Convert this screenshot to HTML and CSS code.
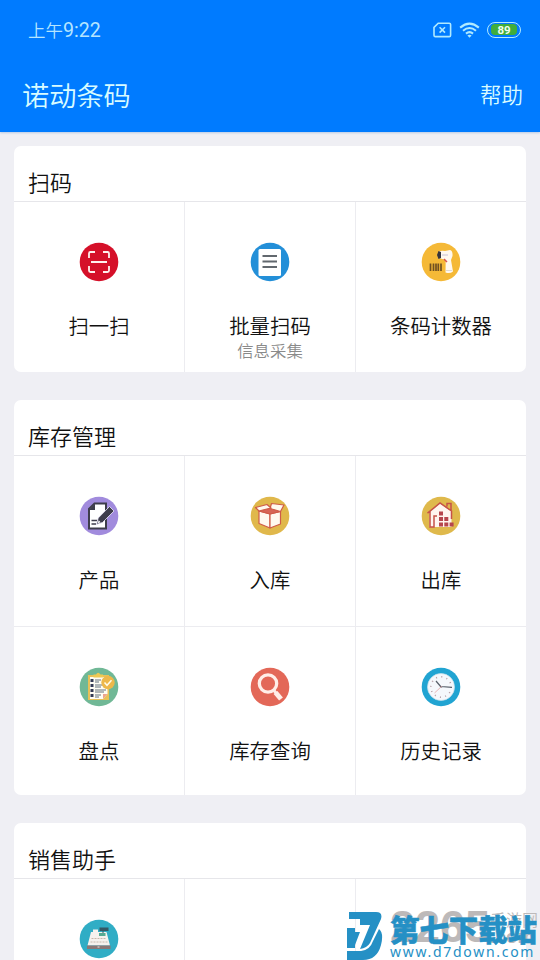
FILE: index.html
```html
<!DOCTYPE html>
<html lang="zh-CN">
<head>
<meta charset="utf-8">
<title>诺动条码</title>
<link rel="stylesheet" href="styles.css">
</head>
<body>
<header class="top">
  <div class="status">
    <span class="time">上午<span class="clock">9:22</span></span>
    <div class="indicators">
      <svg class="sim" viewBox="0 0 19 16"><path d="M5.2 1.2H16.2Q17.6 1.2 17.6 2.6V13.2Q17.6 14.6 16.2 14.6H2.4Q1 14.6 1 13.2V5.4Z"/><path d="M6.600 5.200l5.400 5.400M12 5.200l-5.400 5.400"/></svg>
      <svg class="wifi" viewBox="0 0 22 16"><path d="M1.200 5.500Q11-2.800 20.800 5.500M4.200 8.800Q11 3.100 17.800 8.800M7.300 11.800Q11 8.700 14.700 11.800"/><path class="dot" d="M8.800 13.800Q11 12.200 13.200 13.800L11 16Z"/></svg>
      <span class="battery"><span class="charge">89</span></span>
    </div>
  </div>
  <nav class="bar"><h1>诺动条码</h1><span class="help">帮助</span></nav>
</header>
<main>
  <section class="card">
    <h2>扫码</h2>
    <div class="grid">
      <div class="cell">
        <svg class="icon" viewBox="0 0 40 40"><circle cx="20" cy="20" r="19.300" fill="#d51029"/><path d="M10 16V11.500Q10 10 11.500 10H16M24 10H28.500Q30 10 30 11.500V16M30 24V28.500Q30 30 28.500 30H24M16 30H11.500Q10 30 10 28.500V24M12 20H28" fill="none" stroke="#fff0ed" stroke-width="1.800"/></svg>
        <span class="label">扫一扫</span>
      </div>
      <div class="cell">
        <svg class="icon" viewBox="0 0 40 40"><circle cx="20" cy="20" r="19.300" fill="#238fd8"/><rect x="8.500" y="7" width="22.500" height="27" rx="1.500" fill="#fff"/><path d="M12.500 14H27M12.500 19.500H27M12.500 25H27" stroke="#62686e" stroke-width="2"/></svg>
        <span class="label">批量扫码</span><span class="sub">信息采集</span>
      </div>
      <div class="cell">
        <svg class="icon" viewBox="0 0 40 40"><circle cx="20" cy="20" r="19.300" fill="#f5b937"/><path d="M18 9.500Q20 8.500 24 9L29 8Q32 9 31.500 14L30 18 32 29.500Q29 32 24.500 30.500L24.700 18 18 16Z" fill="#fff8ef"/><path d="M17.500 9L16 13 17.500 17 20 16V10Z" fill="#34343e"/><path d="M21 13H27" stroke="#c8c2d7"/><path d="M23 17l3 3" stroke="#d85352" stroke-width="1.500"/><path d="M25 28.500H31" stroke="#ded9d3"/><path d="M9.500 21.500V29M12.500 21.500V29M15 21.500V29M17.300 21.500V29M20 21.500V29" stroke="#705022" stroke-width="1.700"/></svg>
        <span class="label">条码计数器</span>
      </div>
    </div>
  </section>
  <section class="card">
    <h2>库存管理</h2>
    <div class="grid">
      <div class="cell">
        <svg class="icon" viewBox="0 0 40 40"><circle cx="20" cy="20" r="19.300" fill="#a18bdd"/><path d="M15.500 7.500H27V32.500H10V13Z" fill="#fff" stroke="#3e3d4c" stroke-width="2"/><path d="M10 14L16 7.500V14Z" fill="#3e3d4c"/><path d="M12.500 24.500H18M12.500 28H17" stroke="#3e3d4c" stroke-width="1.600"/><path d="M17.500 28.500L19.200 22 30.500 10.500 35 15 23.500 26.500Z" fill="#3e3d4c" stroke="#eee9fc" stroke-width=".8"/><path d="M18.700 27.300l1-3 1.900 1.900Z" fill="#fff"/></svg>
        <span class="label">产品</span>
      </div>
      <div class="cell">
        <svg class="icon" viewBox="0 0 40 40"><circle cx="20" cy="20" r="19.300" fill="#e0b84b"/><g fill="#fff9ef" stroke="#cf5b48" stroke-width="1.200" stroke-linejoin="round"><path d="M9 15L20 18V32L9 27.500Z"/><path d="M20 18L30.500 15.500V28L20 32Z"/><path d="M9 15L20 12 30.500 15.500 20 18Z" fill="#d76556"/><path d="M9 15L5.500 11.500 17 8.500 21 12ZM30.500 15.500L34 9 21.500 7.500 20 12.500Z"/></g></svg>
        <span class="label">入库</span>
      </div>
      <div class="cell">
        <svg class="icon" viewBox="0 0 40 40"><circle cx="20" cy="20" r="19.300" fill="#dfb94c"/><path d="M8.500 16L19 7.500 30.500 15.500V31H8.500Z" fill="#fff5ef"/><path d="M6.500 17.200L19 7 30.500 15V23M9 15.500V31H13V20H16M26 10.500V7.500H30V15" fill="none" stroke="#c65248" stroke-width="1.500"/><path d="M18 15.500h4v4h-4ZM18 21h4v4h-4ZM23.300 21h4v4h-4ZM18 26.500h4v4h-4ZM23.300 26.500h4v4h-4ZM28.600 26.500h4v4h-4Z" fill="#b6464d"/></svg>
        <span class="label">出库</span>
      </div>
      <div class="cell">
        <svg class="icon" viewBox="0 0 40 40"><circle cx="20" cy="20" r="19.300" fill="#70b896"/><path d="M9 8H30V33H9Z" fill="#e8c158"/><path d="M11 10H28.500V27L24 32H11Z" fill="#fffdf4"/><path d="M14.500 7.500H17Q19 4 21.500 7.500H24V10.500H14.500Z" fill="#efc953"/><path d="M24 32V27H28.500Z" fill="#eea58e"/><path d="M11.500 12h3v3h-3ZM11.500 17h3v3h-3ZM11.500 22h3v3h-3ZM11.500 27h3v3h-3Z" fill="#363c55"/><path d="M16 13H22M16 15H20M16 18H24M16 20H22M16 23H27M16 25H25M16 28H22M16 30H20" stroke="#67747e" stroke-width="1.200"/><circle cx="29" cy="15.500" r="6.700" fill="#edb84b"/><path d="M25.500 15.500l2.500 2.800 4.500-5" fill="none" stroke="#fffbea" stroke-width="1.500"/></svg>
        <span class="label">盘点</span>
      </div>
      <div class="cell">
        <svg class="icon" viewBox="0 0 40 40"><circle cx="20" cy="20" r="19.300" fill="#e36858"/><circle cx="18" cy="16.500" r="8.700" fill="none" stroke="#ffeee8" stroke-width="3.300"/><path d="M23.500 23l2.800 3.300" stroke="#ffeee8" stroke-width="3"/><path d="M25.500 25.500l5.500 6.500" stroke="#ffeee8" stroke-width="5"/></svg>
        <span class="label">库存查询</span>
      </div>
      <div class="cell">
        <svg class="icon" viewBox="0 0 40 40"><circle cx="20" cy="20" r="19.300" fill="#21a4d2"/><circle cx="20" cy="20" r="13.500" fill="#f5f8fc" stroke="#c8dfe9" stroke-width=".7"/><circle cx="20" cy="20" r="10.200" fill="none" stroke="#b69fa6" stroke-width="1.600" stroke-dasharray="1 4.340"/><path d="M20.500 20.500L15 14M20 19.500l11 .8" stroke="#59616b" stroke-width="1.200"/><path d="M21 19L13.500 26" stroke="#df9a99" stroke-width=".7"/></svg>
        <span class="label">历史记录</span>
      </div>
    </div>
  </section>
  <section class="card last">
    <h2>销售助手</h2>
    <div class="grid">
      <div class="cell">
        <svg class="icon" viewBox="0 0 40 40"><circle cx="20" cy="20" r="19.300" fill="#30adc5"/><path d="M12 13H14V10.500H19V13H27.500L31 26.500H8.500Z" fill="#f5f2ee"/><path d="M20.500 8.500H29.500V12H20.500Z" fill="#345966"/><path d="M24 12v2" stroke="#345966"/><path d="M20 14H26.500V17H20Z" fill="#55aa92"/><path d="M12.500 19.500H27.500M11.500 23H28.500" stroke="#c7b8ac" stroke-width="1.200" stroke-dasharray="2 1"/><path d="M8 26.500H31.500V30H8Z" fill="#8b7775"/><path d="M18.500 28h2" stroke="#ede5df"/></svg>
      </div>
      <div class="cell"></div>
      <div class="cell"></div>
    </div>
  </section>
</main>
<div class="watermark">
  <div class="ghost"><span class="digits">2265</span><span class="ghost-side"><span>手游网</span><span class="ghost-com">.com</span></span></div>
  <svg class="logo" viewBox="0 0 36 48"><path d="M2 0H29Q36 0 34 7L23 31Q20 36 13 37L23 13H13V7H2ZM0 16H8V20H13L8 33V36H0ZM32 17Q37 21 34 33Q30 48 16 48H0V39H14Q23 38 26 29Z" fill="#2590c5"/></svg>
  <div class="brand"><span class="brand-name">第七下载站</span><span class="brand-url">www.d7down.com</span></div>
</div>
</body>
</html>
```
FILE: styles.css
```css
* { box-sizing: border-box; }
body {
  margin: 0;
  height: 960px;
  overflow: hidden;
  position: relative;
  background: #efeff4;
  color: #111;
  font-family: "Noto Sans CJK SC", sans-serif;
  font-weight: 350;
}
h1, h2 { margin: 0; font-weight: inherit; }
.top { height: 132px; background: #007bff; color: #d8fbff; box-shadow: 0 1px 2px #b8cbe5; }
.status { height: 59px; padding: 0 19px 0 28px; display: flex; justify-content: space-between; align-items: center; }
.time { padding-top: 1px; font-size: 17.5px; line-height: 24px; color: #b5e5ff; }
.clock { font: 19.6px/24px Roboto, sans-serif; }
.indicators { display: flex; align-items: center; gap: 7px; }
.sim { width: 19px; height: 16px; }
.wifi { width: 21px; height: 16px; }
.sim path, .wifi path { fill: none; stroke: #b0eaff; stroke-width: 1.6; }
.wifi path { stroke-width: 2.1; }
.wifi .dot { fill: #b0eaff; stroke: none; }
.battery { width: 34px; height: 16px; padding: 1.5px 3px; border: 1.5px solid #b0eaff; border-radius: 8px; display: flex; }
.charge { flex: 1; display: flex; align-items: center; justify-content: center; background: #40ad3b; border-radius: 4px; color: #f2ffef; font: bold 11.5px/10px Roboto, sans-serif; }
.bar { height: 70px; padding: 0 17px 0 22px; display: flex; justify-content: space-between; align-items: center; }
h1 { font-size: 27.2px; line-height: 40px; }
.help { font-size: 21.5px; line-height: 32px; }
main { padding: 14px 14px 0; display: flex; flex-direction: column; gap: 28px; }
.card { background: #fff; border-radius: 7px; overflow: hidden; }
.last { border-radius: 7px 7px 0 0; }
h2 { height: 56px; padding: 20px 14px 0; font-size: 22px; line-height: 31px; border-bottom: 1px solid #e6e6ea; }
.grid { display: grid; grid-template-columns: 171px 171px 170px; }
.cell { height: 170px; padding-top: 40px; display: flex; flex-direction: column; align-items: center; border-right: 1px solid #ececf0; }
.cell:nth-child(3n) { border-right: 0; }
.cell:nth-child(n+4) { height: 169px; border-top: 1px solid #ececf0; }
.last .cell { height: 81px; }
.icon { width: 40px; height: 40px; }
.label { margin-top: 28px; font-size: 20.4px; line-height: 30px; }
.sub { font-size: 16.4px; line-height: 20px; color: #8a8a8a; }
.watermark { position: absolute; left: 347px; top: 912px; width: 193px; height: 48px; display: flex; gap: 7px; }
.logo { width: 36px; height: 48px; position: relative; }
.brand { display: flex; flex-direction: column; position: relative; color: #2590c5; }
.brand-name { font-size: 29.4px; line-height: 32px; font-weight: 900; white-space: nowrap; -webkit-text-stroke: .5px #2590c5; }
.brand-url { font: 14px/16px "Noto Sans", sans-serif; letter-spacing: 1.7px; white-space: nowrap; }
.ghost { position: absolute; left: 43px; top: -9px; display: flex; color: #bdb9b9; }
.digits { font: bold 45px/48px "Liberation Sans", sans-serif; }
.ghost-side { display: flex; flex-direction: column; padding-top: 7px; font-size: 16px; line-height: 18px; white-space: nowrap; }
.ghost-com { font: bold 19px/18px "Liberation Sans", sans-serif; }
```
